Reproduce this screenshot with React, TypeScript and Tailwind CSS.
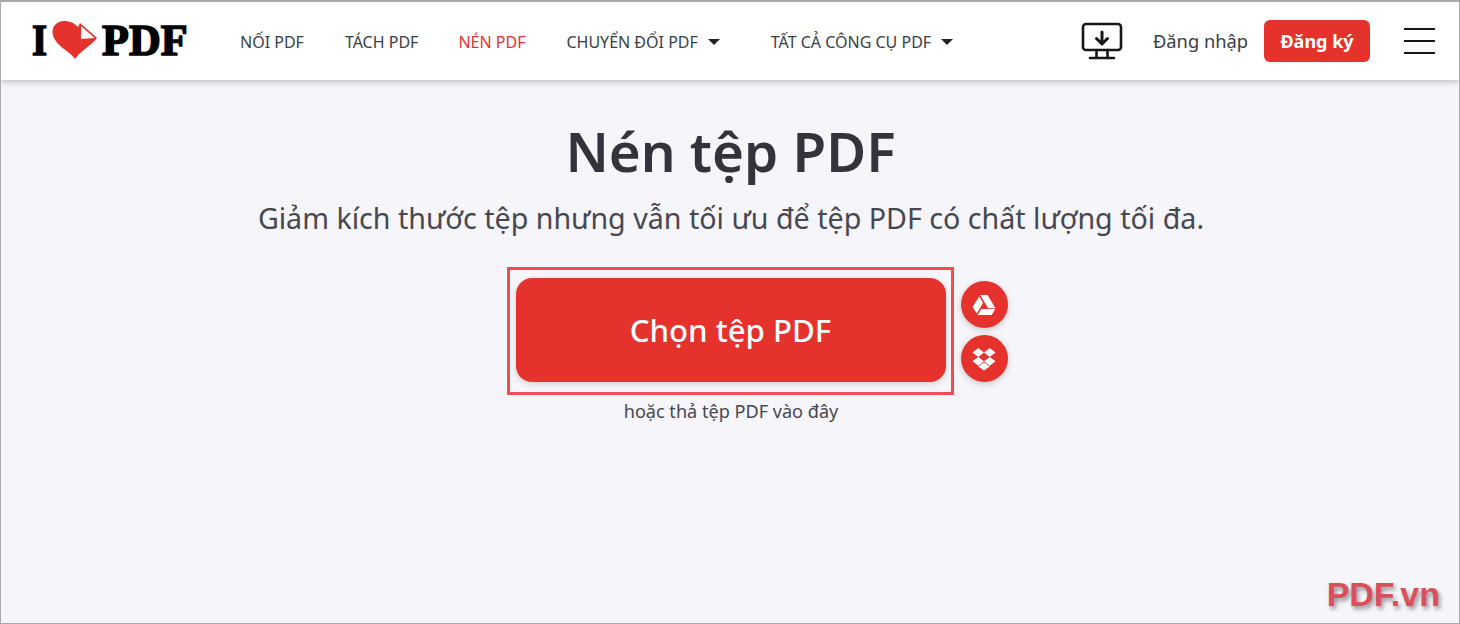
const font = { fontFamily: '"Noto Sans", sans-serif' };

function Caret() {
  return <span className="ml-[10px] h-0 w-0 border-x-[6px] border-t-[6px] border-x-transparent border-t-[#222]" />;
}

function Logo() {
  return (
    <div className="flex items-center text-[44px] font-bold leading-none text-black [-webkit-text-stroke:1.6px_#000] [font-family:'Liberation_Serif',serif]">
      <span className="ml-[1px] block w-[16px] origin-left scale-x-[0.88]">I</span>
      <svg width="46" height="40" viewBox="0 0 46 40" className="ml-[4px] mt-[-2px]">
        <path d="M23 39 C18 31 1 25 0.5 12 C0.5 5 6 1 12 1 C18 1 22 3 26 7 L28 3 L45 18 C39 26 28 31 23 39Z" fill="#e5322d" />
        <path d="M29 6 L42.5 18 L29 19 Z" fill="#fff" />
      </svg>
      <span className="ml-[4px] block w-[85px] whitespace-nowrap">PDF</span>
    </div>
  );
}

export default function App() {
  return (
    <div className="relative flex h-[624px] w-[1460px] flex-col overflow-hidden border border-t-2 border-[#a9a9a9] bg-[#f5f5fa]" style={font}>
      {/* Header */}
      <header className="z-10 flex h-[78px] items-center bg-white pl-[30px] pr-[24px] shadow-[0_2px_6px_rgba(0,0,0,0.22)]">
        <Logo />
        <nav className="ml-[53px] mt-[2px] flex items-center text-[16px] text-[#383e45]">
          <a className="mr-[41px]">NỐI PDF</a>
          <a className="mr-[40px]">TÁCH PDF</a>
          <a className="mr-[41px] text-[#e5322d]">NÉN PDF</a>
          <a className="mr-[51px] flex items-center">
            CHUYỂN ĐỔI PDF
            <Caret />
          </a>
          <a className="flex items-center">
            TẤT CẢ CÔNG CỤ PDF
            <Caret />
          </a>
        </nav>
        <div className="ml-auto flex items-center">
          <svg width="42" height="38" viewBox="0 0 42 38" fill="none" stroke="#161616" strokeWidth="2.6" strokeLinecap="round" strokeLinejoin="round">
            <rect x="2" y="2" width="38" height="26" rx="3" />
            <path d="M21 10v12M15.5 16.5l5.5 5.5 5.5-5.5" strokeWidth="3" />
            <path d="M15.5 28v7M26.5 28v7M9 36h24" />
          </svg>
          <a className="ml-[30px] text-[18.3px] text-[#383e45]">Đăng nhập</a>
          <button className="ml-[16px] flex h-[42px] w-[106px] items-center justify-center rounded-[6px] bg-[#e5322d] text-[18px] font-bold text-white">
            Đăng ký
          </button>
          <div className="ml-[34px] flex w-[31px] flex-col gap-[10px]">
            <span className="h-[2px] bg-[#161616]" />
            <span className="h-[2px] bg-[#161616]" />
            <span className="h-[2px] bg-[#161616]" />
          </div>
        </div>
      </header>

      {/* Main */}
      <main className="flex flex-col items-center pt-[33px]">
        <h1 className="ml-[1px] text-[54.7px] font-semibold leading-[76px] text-[#33333b]">Nén tệp PDF</h1>
        <p className="ml-[2px] mt-[11px] text-[28.65px] leading-[36px] text-[#47474f]">
          Giảm kích thước tệp nhưng vẫn tối ưu để tệp PDF có chất lượng tối đa.
        </p>
        <div className="relative mt-[31px]">
          <div className="border-[3px] border-[#ef4e52] pb-[10px] pl-[6px] pr-[5px] pt-[8px]">
            <button className="flex h-[104px] w-[430px] items-center justify-center rounded-[16px] bg-[#e5322d] text-[31.2px] font-medium text-white shadow-[0_2px_6px_rgba(0,0,0,0.15)]">
              Chọn tệp PDF
            </button>
          </div>
          {/* Cloud buttons */}
          <div className="absolute left-[454px] top-[14px] flex flex-col gap-[7px]">
            <span className="flex h-[47px] w-[47px] items-center justify-center rounded-full bg-[#e5322d] shadow-[0_2px_6px_rgba(0,0,0,0.2)]">
              <svg width="24" height="22" viewBox="0 0 24 22" fill="#fff">
                <path d="M8.2 1h7.4l7.8 13.3h-7.3z" />
                <path d="M7.3 2.6l3.6 6.3-6 10.6-4.4-6.6z" />
                <path d="M9.2 14.9h14.2l-3.8 6.1H5.8z" />
              </svg>
            </span>
            <span className="flex h-[47px] w-[47px] items-center justify-center rounded-full bg-[#e5322d] shadow-[0_2px_6px_rgba(0,0,0,0.2)]">
              <svg width="24" height="24" viewBox="0 0 24 24" fill="#fff">
                <path d="M6.3 1L0.5 5.5l5.8 4.4L12 5.5z" />
                <path d="M17.7 1L12 5.5l5.7 4.4 5.8-4.4z" />
                <path d="M0.5 14.3l5.8 4.4L12 14.3 6.3 9.9z" />
                <path d="M17.7 9.9L12 14.3l5.7 4.4 5.8-4.4z" />
                <path d="M6.3 19.6l5.7 3.9 5.7-3.9-5.7-4.4z" />
              </svg>
            </span>
          </div>
        </div>
        <p className="ml-[2px] mt-[4px] text-[18.1px] leading-[24px] text-[#47474f]">hoặc thả tệp PDF vào đây</p>
      </main>

      {/* Watermark */}
      <div className="absolute bottom-[9px] right-[19px] font-['Liberation_Sans',sans-serif] text-[34px] font-bold leading-[40px] text-[#d9505c] [text-shadow:2px_3px_4px_rgba(0,0,0,0.4)]">
        PDF.vn
      </div>
    </div>
  );
}
